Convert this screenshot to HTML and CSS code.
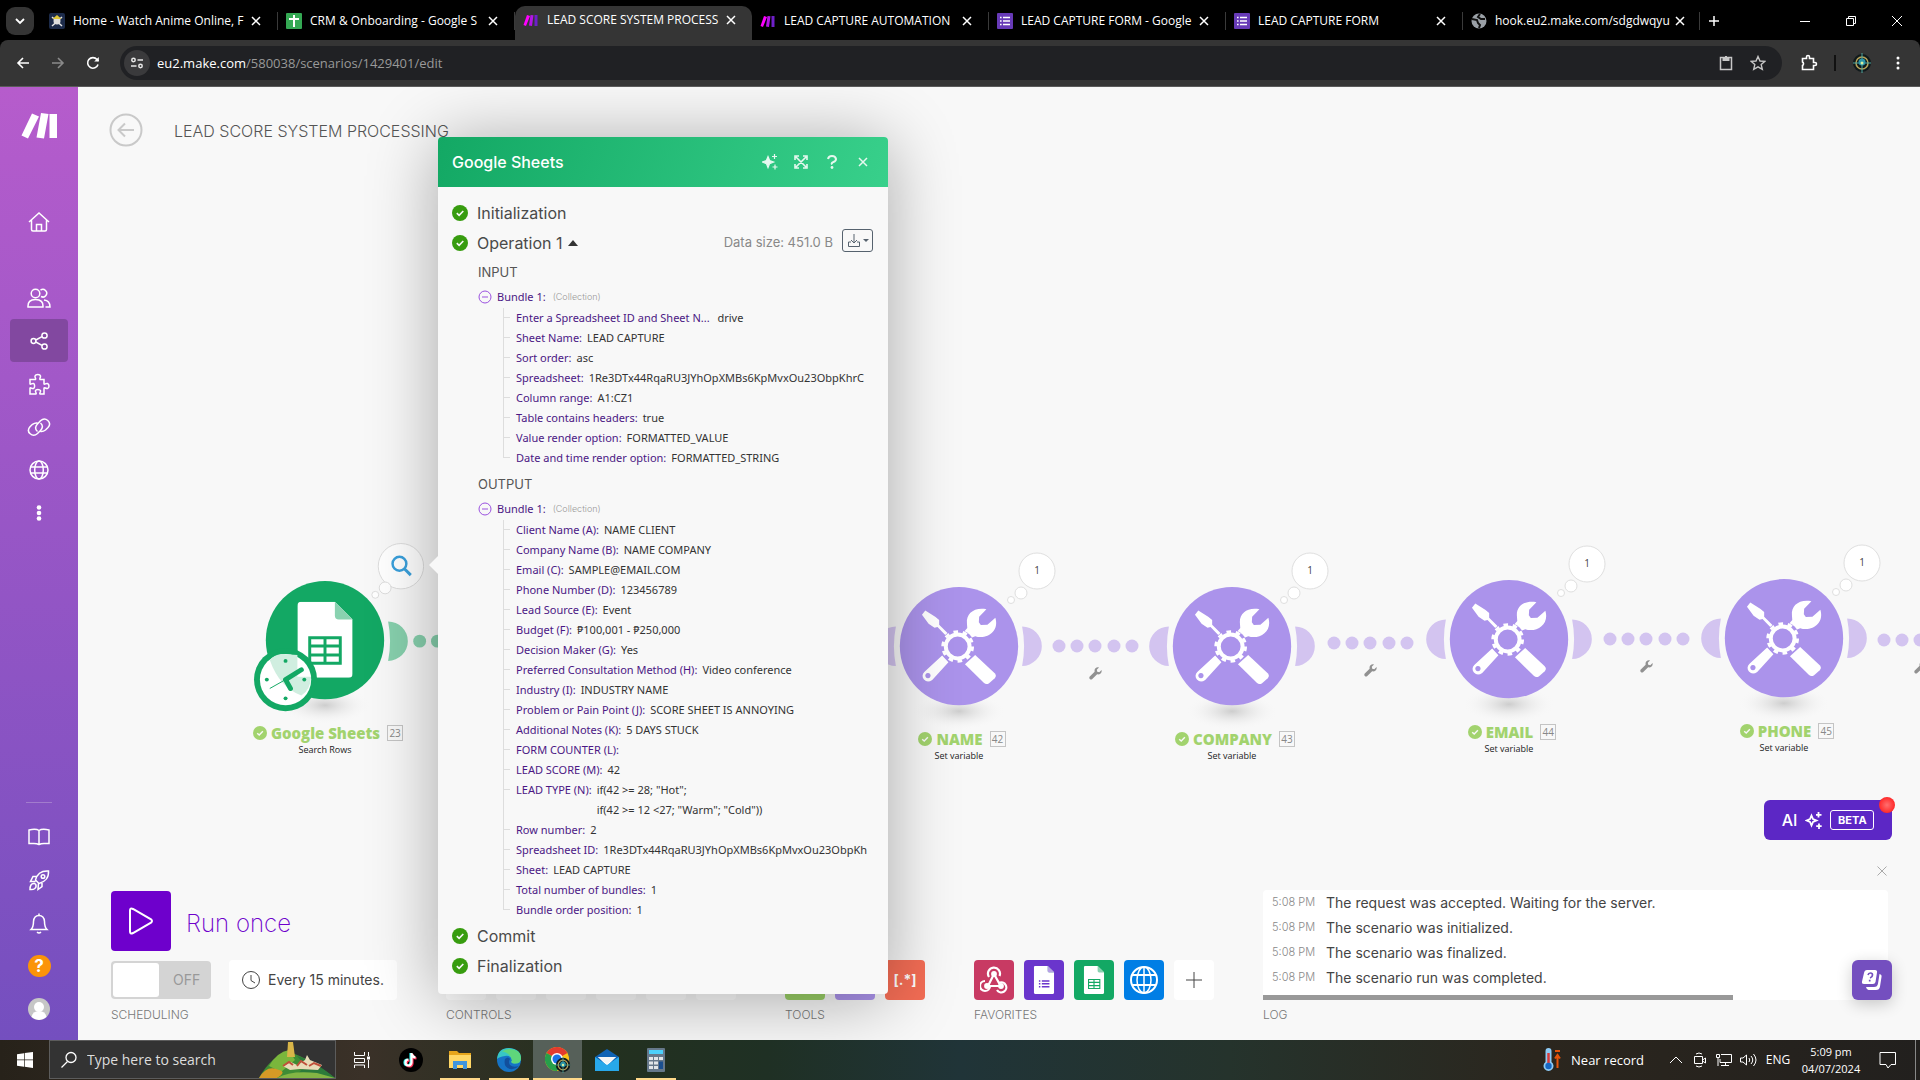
FILE: index.html
```html
<!DOCTYPE html>
<html lang="en">
<head>
<meta charset="utf-8">
<title>LEAD SCORE SYSTEM PROCESSING | Make</title>
<link rel="stylesheet" href="styles.css">
</head>
<body>
<svg class="defs" aria-hidden="true">
  <symbol id="x" viewBox="0 0 12 12"><path d="M2 2l8 8M10 2l-8 8" fill="none" stroke="currentColor" stroke-width="1.5"/></symbol>
  <symbol id="form" viewBox="0 0 16 16"><rect width="16" height="16" rx="1" fill="#673ab7"/><path d="M6 4.5h7M6 8h7M6 11.500h7M3 4.500h1.600M3 8h1.600M3 11.500h1.600" stroke="#fff" stroke-width="1.600"/></symbol>
  <symbol id="make" viewBox="0 0 16 16"><path d="M4 3l3 1-4 10-2.500-1z" fill="#f0f"/><path d="M7.500 3l3 .3-1.500 10.700-3-.4z" fill="#b414e8"/><path d="M11.500 3h3v11h-3z" fill="#6e1fc9"/></symbol>
  <symbol id="check" viewBox="0 0 16 16"><circle cx="8" cy="8" r="8" fill="currentColor"/><path d="M4.800 8.200l2.300 2.200 4.200-4.400" fill="none" stroke="#f8f8f8" stroke-width="1.600"/></symbol>
  <symbol id="minus" viewBox="0 0 14 14"><circle cx="7" cy="7" r="6" fill="none" stroke="currentColor"/><path d="M4 7h6" stroke="currentColor"/></symbol>
  <symbol id="spark" viewBox="0 0 16 16"><path d="M6 2.500l1.600 4 4 1.500-4 1.600-1.600 4-1.600-4-4-1.600 4-1.500zM12.500 0v5M10 2.500h5M13 10.500v5M10.500 13h5" fill="currentColor" stroke="currentColor" stroke-width="1.200"/></symbol>
  <symbol id="sheet" viewBox="0 0 56 77"><path d="M4 0h34l18 18v55q0 4-4 4H4q-4 0-4-4V4q0-4 4-4z" fill="#fff"/><path d="M38 0l18 18H42q-4 0-4-4z" fill="#89d2b0"/></symbol>
  <symbol id="wrench" viewBox="0 0 12 12"><path d="M11.600 2.800L9.500 4.900 7.600 4.400 7.200 2.500 9.200.4C6.700-.3 4.600 1.800 5.200 4.300L.5 9.100c-.8 1.600.8 3.100 2.300 2.300L7.500 6.800c2.500.6 4.700-1.500 4.100-4z" fill="#919191"/></symbol>
  <symbol id="link-dots" viewBox="0 0 88 44"><g fill="#d3c4f0"><circle cx="7" cy="7" r="6.500"/><circle cx="25" cy="7" r="6.500"/><circle cx="43" cy="7" r="6.500"/><circle cx="62" cy="7" r="6.500"/><circle cx="80" cy="7" r="6.500"/></g><use href="#wrench" x="37" y="28" width="13" height="13"/></symbol>
  <symbol id="tools" viewBox="0 0 358 358">
    <g fill="#fff">
      <path d="M77 71L67 84 87 111 105 123 114 121 141 149 148 143 119 114 119 100 107 90z"/>
      <path d="M262 67C225 60 200 80 203 110L204 124 195 135 215 154 228 149C262 160 302 135 289 93L265 114 245 115 239 107 240 90z"/>
      <path d="M128 207L147 228 98 281Q84 292 73 280 64 268 74 257zM85 260a8 8 0 1 0 .1 0z" fill-rule="evenodd"/>
      <path d="M197 234L228 206 287 261Q294 268 287 276L270 291Q262 297 254 290z"/>
    </g>
    <circle cx="175" cy="180" r="51" fill="#ab93eb"/>
    <circle cx="175" cy="180" r="36" fill="none" stroke="#fff" stroke-width="12"/>
    <circle cx="175" cy="180" r="45" fill="none" stroke="#fff" stroke-width="9" stroke-dasharray="14 14.270"/>
  </symbol>
  <symbol id="bubbles" viewBox="0 0 60 60"><g fill="#fff" stroke="#dfdfdf"><circle cx="38" cy="20" r="18"/><circle cx="22" cy="42" r="6"/><circle cx="12" cy="49" r="3.500"/></g></symbol>
  <radialGradient id="shade"><stop offset="0" stop-color="#cdcdcd"/><stop offset="1" stop-color="#f8f8f8" stop-opacity="0"/></radialGradient>
  <symbol id="module" viewBox="-25 0 170 144">
    <ellipse cx="60" cy="126" rx="47" ry="19" fill="url(#shade)"/>
    <path d="M124 40a20 20 0 0 1 0 40q4-20 0-40zM-4 40a20 20 0 0 0 0 40q-4-20 0-40z" fill="#d3c4f0"/>
    <circle cx="60" cy="60" r="60" fill="#ab93eb"/><use href="#tools" width="120" height="120"/>
  </symbol>
  <symbol id="badge-emblem" viewBox="0 0 20 20"><circle cx="10" cy="10" r="9" fill="#101a1c"/><circle cx="10" cy="10" r="6" fill="none" stroke="#b8a45a" stroke-width="1.500"/><path d="M10 0v20M1 10h18" stroke="#4fa7a0"/><circle cx="10" cy="9" r="3.500" fill="#2a94a8"/><circle cx="10" cy="10" r="1.500" fill="#d9f0a0"/></symbol>
</svg>

<header class="browser">
  <div class="tabs">
    <button class="tab-menu" aria-label="Search tabs"><svg width="10" height="10" viewBox="0 0 10 10"><path d="M1 3l4 4 4-4" fill="none" stroke="#fff" stroke-width="1.800"/></svg></button>
    <div class="tab"><svg class="fav" viewBox="0 0 16 16"><rect width="16" height="16" rx="2" fill="#1c2b4a"/><path d="M3 4l10 9M13 4L3 13" stroke="#e6e6e6" stroke-width="1.500"/><circle cx="8" cy="8" r="3.500" fill="#ddd"/><path d="M3.500 6h9L8 2z" fill="#dfc638"/></svg><span>Home - Watch Anime Online, F</span><button aria-label="Close tab"><svg><use href="#x"/></svg></button></div>
    <div class="tab"><svg class="fav" viewBox="0 0 16 16"><rect width="16" height="16" rx="1" fill="#34a853"/><path d="M8 2v12M3 6h10" stroke="#fff" stroke-width="2"/></svg><span>CRM &amp; Onboarding - Google S</span><button aria-label="Close tab"><svg><use href="#x"/></svg></button></div>
    <div class="tab active"><svg class="fav"><use href="#make"/></svg><span>LEAD SCORE SYSTEM PROCESS</span><button aria-label="Close tab"><svg><use href="#x"/></svg></button></div>
    <div class="tab"><svg class="fav"><use href="#make"/></svg><span>LEAD CAPTURE AUTOMATION</span><button aria-label="Close tab"><svg><use href="#x"/></svg></button></div>
    <div class="tab"><svg class="fav"><use href="#form"/></svg><span>LEAD CAPTURE FORM - Google</span><button aria-label="Close tab"><svg><use href="#x"/></svg></button></div>
    <div class="tab"><svg class="fav"><use href="#form"/></svg><span>LEAD CAPTURE FORM</span><button aria-label="Close tab"><svg><use href="#x"/></svg></button></div>
    <div class="tab"><svg class="fav" viewBox="0 0 16 16"><circle cx="8" cy="8" r="7.500" fill="#9aa0a6"/><path d="M1 6l5 1 1 3 2 2-1 3M9 1l-2 3 3 2h4" fill="none" stroke="#111" stroke-width="2"/></svg><span>hook.eu2.make.com/sdgdwqyu</span><button aria-label="Close tab"><svg><use href="#x"/></svg></button></div>
    <button class="new-tab" aria-label="New tab"><svg width="12" height="12" viewBox="0 0 12 12"><path d="M6 1v10M1 6h10" stroke="#fff" stroke-width="1.500"/></svg></button>
    <div class="win">
      <button aria-label="Minimize"><svg width="10" height="10" viewBox="0 0 10 10"><path d="M0 5.500h10" stroke="#fff"/></svg></button>
      <button aria-label="Restore"><svg width="10" height="10" viewBox="0 0 10 10"><path d="M.5 2.500h7v7h-7zM2.500 2.500v-2h7v7h-2" fill="none" stroke="#fff"/></svg></button>
      <button aria-label="Close"><svg width="10" height="10" viewBox="0 0 10 10"><path d="M0 0l10 10M10 0L0 10" stroke="#fff"/></svg></button>
    </div>
  </div>
  <div class="toolbar">
    <button aria-label="Back"><svg width="14" height="14" viewBox="0 0 14 14"><path d="M13 7H2M7 2L2 7l5 5" fill="none" stroke="#fff" stroke-width="1.600"/></svg></button>
    <button aria-label="Forward"><svg width="14" height="14" viewBox="0 0 14 14"><path d="M1 7h11M7 2l5 5-5 5" fill="none" stroke="#8a8a8a" stroke-width="1.600"/></svg></button>
    <button aria-label="Reload"><svg width="14" height="14" viewBox="0 0 14 14"><path d="M12 8.500A5.300 5.300 0 1 1 11 3.500l1.500 1.500" fill="none" stroke="#fff" stroke-width="1.600"/><path d="M12.800 1v4.600H8.200z" fill="#fff"/></svg></button>
    <div class="omnibox">
      <span class="site"><svg width="14" height="14" viewBox="0 0 14 14" fill="none" stroke="#e8e8e8" stroke-width="1.500"><circle cx="3.500" cy="4" r="1.700"/><path d="M7.500 4H13M1 10h5.500"/><circle cx="10.500" cy="10" r="1.700"/></svg></span>
      <p class="url">eu2.make.com<span>/580038/scenarios/1429401/edit</span></p>
      <button aria-label="Clipboard"><svg width="16" height="16" viewBox="0 0 16 16" fill="none" stroke="#c7c7c7" stroke-width="1.500"><path d="M2.500 2.500h11v12h-11z"/><path d="M5.500 3h5v2h-5zM8 1v2" stroke-width="2"/></svg></button>
      <button aria-label="Bookmark"><svg width="16" height="16" viewBox="0 0 16 16"><path d="M8 1.500l2 4.500 4.800.4-3.600 3.200 1.100 4.800L8 11.800l-4.300 2.600 1.100-4.800L1.200 6.400 6 6z" fill="none" stroke="#c7c7c7" stroke-width="1.400"/></svg></button>
    </div>
    <button aria-label="Extensions"><svg width="18" height="18" viewBox="0 0 18 18"><path d="M2.500 4.500h4V3a1.500 1.500 0 0 1 3 0v1.500h4v4H15a1.500 1.500 0 0 1 0 3h-1.500v4h-11v-4a2 2 0 0 0 0-3.500z" fill="none" stroke="#fff" stroke-width="1.600"/></svg></button>
    <i class="bar-split"></i>
    <button aria-label="Profile"><svg width="20" height="20"><use href="#badge-emblem"/></svg></button>
    <button aria-label="Menu"><svg width="4" height="16" viewBox="0 0 4 16" fill="#fff"><circle cx="2" cy="3" r="1.500"/><circle cx="2" cy="8" r="1.500"/><circle cx="2" cy="13" r="1.500"/></svg></button>
  </div>
</header>

<div class="app">
  <nav class="side">
    <a class="logo" href="#" aria-label="Make"><svg width="36" height="26" viewBox="0 0 36 26" fill="#fff"><path d="M11 .5l7 3L7 25.500l-6.500-3zM20 0l7.500 1-4.500 24.500-7.500-1zM28.500 1H36v24h-7.500z"/></svg></a>
    <a class="home" href="#" aria-label="Home"><svg viewBox="0 0 24 24"><path d="M2 12L12 3l10 9M4.500 10v9.500q0 1.500 1.500 1.500h12q1.500 0 1.500-1.500V10M9.500 21v-6.500h5V21"/></svg></a>
    <a href="#" aria-label="Team"><svg viewBox="0 0 24 24"><circle cx="8.500" cy="7.500" r="4.300"/><path d="M13.500 4.200a3.800 3.800 0 1 1 .5 6.300M1 21q-.5-7.500 7.500-7.500T16 21zM17 14q6 .5 6 7h-4.500"/></svg></a>
    <a class="on" href="#" aria-label="Scenarios"><svg viewBox="0 0 24 24"><circle cx="6.500" cy="12" r="2.400"/><circle cx="17.500" cy="6.500" r="2.600"/><circle cx="17.500" cy="17.500" r="2.600"/><path d="M8.800 11l6.200-3.300M8.800 13l6.200 3.300"/></svg></a>
    <a href="#" aria-label="Templates"><svg viewBox="0 0 24 24"><path d="M3 7.500h5.500c1-1-1-1.500-.5-3.500.8-2 5-2 5.500 0 .3 2-1.500 2.500-.5 3.500h4v4.500c1 1 1.500-1 3.500-.5 2 .8 2 4.500 0 5-2 .3-2.500-1.500-3.500-.5v6h-4c-1-1 1-1.500.5-3.500-.8-1.500-4.500-1.500-5 0-.5 2 1.500 2.500.5 3.500H3v-6c1-1 1.500 1 3.500.5 1.500-.8 1.500-4.500 0-5-2-.5-2.500 1.500-3.500.5z"/></svg></a>
    <a href="#" aria-label="Connections"><svg viewBox="0 0 24 24"><path d="M10.500 16.500c-3-2.500-2-5.500 0-7.500l3-3.200c5-4.500 12 1.500 7.500 6.700l-2.500 2.500q-2.500 2-5 1.500M13.500 8c3 2.500 2 5.500 0 7.500l-3 3C5.500 23-1.500 17 3 11.800l2.500-2.500Q8 7.500 10.500 8"/></svg></a>
    <a href="#" aria-label="Webhooks"><svg viewBox="0 0 24 24"><circle cx="12" cy="12" r="9"/><ellipse cx="12" cy="12" rx="4.300" ry="9"/><path d="M4 9h16M4 15h16"/></svg></a>
    <a href="#" aria-label="More"><svg viewBox="0 0 24 24" class="solid"><circle cx="12" cy="6.500" r="2.300"/><circle cx="12" cy="12" r="2.300"/><circle cx="12" cy="17.500" r="2.300"/></svg></a>
    <hr>
    <a href="#" aria-label="Resources"><svg viewBox="0 0 24 24"><path d="M12 19.500Q10 18.500 7 18.500H2V5q7-1.500 10 .5Q15 3.500 22 5v13.500h-5q-3 0-5 1zM12 5.500v14"/></svg></a>
    <a href="#" aria-label="What's new"><svg viewBox="0 0 24 24"><path d="M8.500 12C10 6 14 2.500 21.500 3c.5 6.500-3.500 11-9.500 12.500zM9.500 8.500H6L3.500 13.500h5M15 15v3.500L11 21.500l.5-6M7.500 15.500C4 15 3 18 3 21.500c4 .5 7-1.500 5.800-5z"/><circle cx="16" cy="8.500" r="1.800"/></svg></a>
    <a href="#" aria-label="Notifications"><svg viewBox="0 0 24 24"><path d="M4 18.500q2.500-2.500 2.500-8Q7 4.500 12 4.500t5.500 6q0 5.500 2.500 8zM12 2.500v2M10 21q2 2 4 0"/></svg></a>
    <a href="#" class="help" aria-label="Help"><b>?</b></a>
    <a href="#" aria-label="Profile"><svg class="avatar" viewBox="0 0 22 22"><circle cx="11" cy="11" r="11" fill="#c6c6c6"/><circle cx="11" cy="9" r="5" fill="#fff"/><path d="M3.500 19q1-6 7.500-6t7.500 6q-7.500 6-15 0z" fill="#fff"/></svg></a>
  </nav>

  <main>
    <div class="canvas">
      <div class="node n-sheets">
        <svg class="mod" viewBox="-25 0 170 144">
          <ellipse cx="60" cy="126" rx="47" ry="19" fill="url(#shade)"/>
          <path d="M124 41a20 20 0 0 1 0 40q4-20 0-40z" fill="#87d0ad"/>
          <circle cx="156" cy="61" r="6.500" fill="#87d0ad"/><circle cx="174" cy="61" r="6.500" fill="#87d0ad"/>
          <circle cx="60" cy="60" r="60" fill="#13a864"/>
          <use href="#sheet" x="32" y="21" width="56" height="77"/>
          <path d="M44.500 57.500h31v26h-31zM44 66h32M44 75h32M60 57v27" fill="none" stroke="#13a864" stroke-width="3"/>
          <circle cx="20" cy="100" r="32" fill="#13a864"/><circle cx="20" cy="100" r="26" fill="#fff"/>
          <path d="M4 80q4-5 12-6l16 1v22h14q-1 14-10 19Q14 108 4 80z" fill="#d0eee0"/>
          <path d="M20 100l16-10M20 100l5 9" stroke="#13a864" stroke-width="5" stroke-linecap="round"/><path d="M4 109l16-9" stroke="#13a864"/>
          <g fill="#13a864"><circle cx="20" cy="81" r="2"/><circle cx="39" cy="100" r="2"/><circle cx="20" cy="119" r="2"/><circle cx="1" cy="100" r="2"/></g>
          <g fill="#fff" stroke="#dcdcdc"><circle cx="137" cy="-15" r="23"/><circle cx="121" cy="7" r="6"/><circle cx="111" cy="14" r="3.500"/></g>
          <circle cx="135.500" cy="-17.500" r="7" fill="none" stroke="#3aa0dc" stroke-width="2.500"/><path d="M140.500-12.500l6.500 6.500" stroke="#3aa0dc" stroke-width="3"/>
        </svg>
        <h2><svg><use href="#check"/></svg>Google Sheets<small>23</small></h2><p>Search Rows</p>
      </div>
      <div class="node n-name"><svg class="mod"><use href="#module"/></svg><div class="bubble"><svg><use href="#bubbles"/></svg><span>1</span></div><h2><svg><use href="#check"/></svg>NAME<small>42</small></h2><p>Set variable</p></div>
      <div class="node n-company"><svg class="mod"><use href="#module"/></svg><div class="bubble"><svg><use href="#bubbles"/></svg><span>1</span></div><h2><svg><use href="#check"/></svg>COMPANY<small>43</small></h2><p>Set variable</p></div>
      <div class="node n-email"><svg class="mod"><use href="#module"/></svg><div class="bubble"><svg><use href="#bubbles"/></svg><span>1</span></div><h2><svg><use href="#check"/></svg>EMAIL<small>44</small></h2><p>Set variable</p></div>
      <div class="node n-phone"><svg class="mod"><use href="#module"/></svg><div class="bubble"><svg><use href="#bubbles"/></svg><span>1</span></div><h2><svg><use href="#check"/></svg>PHONE<small>45</small></h2><p>Set variable</p></div>
      <svg class="conn c1"><use href="#link-dots"/></svg>
      <svg class="conn c2"><use href="#link-dots"/></svg>
      <svg class="conn c3"><use href="#link-dots"/></svg>
      <svg class="conn c4"><use href="#link-dots"/></svg>
    </div>

    <div class="title">
      <button aria-label="Back to scenario"><svg width="34" height="34" viewBox="0 0 34 34" fill="none" stroke="#c9c9c9" stroke-width="2"><circle cx="17" cy="17" r="15.500"/><path d="M25 17H10M16 10.500L9.500 17l6.500 6.500"/></svg></button>
      <h1>LEAD SCORE SYSTEM PROCESSING</h1>
    </div>

    <footer class="panel">
      <section class="sched">
        <div class="run"><button id="run" aria-label="Run once"><svg width="26" height="28" viewBox="0 0 26 28"><path d="M2 3.500v21q0 3 3 1.500l18-10.300q2-1.700 0-3.400L5 2Q2 .5 2 3.500z" fill="none" stroke="#fff" stroke-width="2"/></svg></button><label for="run">Run once</label></div>
        <div class="tools-row">
          <label class="switch"><input type="checkbox" aria-label="Scheduling"><span>OFF</span></label>
          <button class="every"><svg width="18" height="18" viewBox="0 0 18 18" fill="none" stroke="#444"><circle cx="9" cy="9" r="8.500"/><path d="M9 4v5.500l4 2.500"/></svg>Every 15 minutes.</button>
        </div>
        <h3>SCHEDULING</h3>
      </section>
      <section>
        <div class="tools-row"><button aria-label="Save"></button><button aria-label="Settings"></button><button aria-label="Notes"></button><button aria-label="Align"></button><button aria-label="Explain"></button><button aria-label="More"></button></div>
        <h3>CONTROLS</h3>
      </section>
      <section>
        <div class="tools-row"><button class="lime" aria-label="Flow control"></button><button class="lilac" aria-label="Tools"></button><button class="coral" aria-label="Text parser">[.*]</button></div>
        <h3>TOOLS</h3>
      </section>
      <section>
        <div class="tools-row">
          <button class="rose" aria-label="Webhooks"><svg width="28" height="28" viewBox="0 0 28 28" fill="none" stroke="#fff" stroke-width="2.200"><path d="M9 11a6 6 0 1 1 10.500-1M14 8l5 9a5 5 0 1 1-2 7M19.500 20H10a5 5 0 1 1-5-5M14 8l-5.500 11"/><g fill="#fff"><circle cx="14" cy="8" r="1.800"/><circle cx="7" cy="20" r="1.800"/><circle cx="21" cy="20" r="1.800"/></g></svg></button>
          <button class="violet" aria-label="Google Forms"><svg width="22" height="28" viewBox="0 0 56 77"><use href="#sheet" width="56" height="77"/><path d="M38 0l18 18H42q-4 0-4-4z" fill="#b79fe6"/><path d="M14 41h4M14 49h4M14 57h4M22 41h21M22 49h21M22 57h21" stroke="#6a35cc" stroke-width="4"/></svg></button>
          <button class="green" aria-label="Google Sheets"><svg width="22" height="28" viewBox="0 0 56 77"><use href="#sheet" width="56" height="77"/><path d="M13 37h31v25H13zM13 45h31M13 54h31M28 37v25" fill="none" stroke="#13a864" stroke-width="3"/></svg></button>
          <button class="blue" aria-label="HTTP"><svg width="28" height="28" viewBox="0 0 28 28" fill="none" stroke="#fff" stroke-width="2"><circle cx="14" cy="14" r="13"/><ellipse cx="14" cy="14" rx="7" ry="13" stroke-width="1.500"/><path d="M2 9h24M2 19h24"/><path d="M14 1v26" stroke-width="1.500"/></svg></button>
          <button class="white" aria-label="Add favorite"><svg width="16" height="16" viewBox="0 0 16 16"><path d="M8 0v16M0 8h16" stroke="#444"/></svg></button>
        </div>
        <h3>FAVORITES</h3>
      </section>
      <section class="log">
        <button class="close" aria-label="Close log"><svg width="12" height="12" viewBox="0 0 12 12"><path d="M1.500 1.500l9 9M10.500 1.500l-9 9" stroke="#aaa"/></svg></button>
        <ul>
          <li><time>5:08 PM</time>The request was accepted. Waiting for the server.</li>
          <li><time>5:08 PM</time>The scenario was initialized.</li>
          <li><time>5:08 PM</time>The scenario was finalized.</li>
          <li><time>5:08 PM</time>The scenario run was completed.</li>
        </ul>
        <h3>LOG</h3>
      </section>
    </footer>

    <button class="ai">AI<svg width="17" height="17" viewBox="0 0 17 17" fill="none" stroke="#fff" stroke-width="1.800"><path d="M6.500 3.500L8 7l3.500 1.500L8 10l-1.500 3.500L5 10 1.500 8.500 5 7zM13.500 0v5.500M11 2.800h5.500M14 11.500V17M11.200 14.200h5.500"/></svg><span>BETA</span></button>
    <i class="ping"></i>
    <button class="chat" aria-label="Help center"><svg width="22" height="22" viewBox="0 0 22 22"><path d="M6 1h8q2.500 0 2 2.500l-1.500 9.500q-.5 2-2.500 2H3q-2.500 0-2-2.500L3 4q.5-3 3-3z" fill="#fff"/><path d="M18.500 5q2.500.5 2 3l-1.500 9.500q-.5 3.500-4 3.500H7.500q-2-.5-2.500-3h8q3.500 0 4-3.500z" fill="#fff"/><path d="M7 6q.5-2 2.500-2t2 2-2.500 3M8.700 10.800v1.600" fill="none" stroke="#744fbf" stroke-width="1.700"/></svg></button>

    <article class="modal">
      <header>
        <h2>Google Sheets</h2>
        <button aria-label="Assist"><svg width="16" height="16"><use href="#spark"/></svg></button>
        <button aria-label="Expand"><svg width="14" height="14" viewBox="0 0 14 14" fill="none" stroke="currentColor" stroke-width="1.600"><path d="M1 5V1h4M9 1h4v4M13 9v4H9M5 13H1V9M2 2l10 10M12 2L2 12"/></svg></button>
        <button aria-label="Help"><svg width="10" height="14" viewBox="0 0 10 14"><path d="M1 4q.5-3 4-3t4 3q0 2-2.500 3T5 9.500" fill="none" stroke="currentColor" stroke-width="2"/><circle cx="5" cy="12.500" r="1.400" fill="currentColor"/></svg></button>
        <button aria-label="Close"><svg width="10" height="10" viewBox="0 0 10 10"><path d="M1 1l8 8M9 1L1 9" stroke="currentColor" stroke-width="1.500"/></svg></button>
      </header>
      <div class="body">
        <h3><svg><use href="#check"/></svg>Initialization</h3>
        <h3><svg><use href="#check"/></svg>Operation 1<i class="up"></i><span class="size">Data size: 451.0 B</span><button aria-label="Download"><svg width="22" height="14" viewBox="0 0 22 14" fill="none" stroke="#56626e"><path d="M4 8H1.500v4.500h11V8H10M7 0v9M4 6l3 3 3-3"/><path d="M16 5h6l-3 3z" fill="#56626e" stroke="none"/></svg></button></h3>
        <section>
          <h4>INPUT</h4>
          <p><svg><use href="#minus"/></svg>Bundle 1:<small>(Collection)</small></p>
          <ul>
            <li><b>Enter a Spreadsheet ID and Sheet N...</b>&nbsp;drive</li>
            <li><b>Sheet Name:</b>LEAD CAPTURE</li>
            <li><b>Sort order:</b>asc</li>
            <li><b>Spreadsheet:</b>1Re3DTx44RqaRU3JYhOpXMBs6KpMvxOu23ObpKhrC</li>
            <li><b>Column range:</b>A1:CZ1</li>
            <li><b>Table contains headers:</b>true</li>
            <li><b>Value render option:</b>FORMATTED_VALUE</li>
            <li><b>Date and time render option:</b>FORMATTED_STRING</li>
          </ul>
        </section>
        <section>
          <h4>OUTPUT</h4>
          <p><svg><use href="#minus"/></svg>Bundle 1:<small>(Collection)</small></p>
          <ul>
            <li><b>Client Name (A):</b>NAME CLIENT</li>
            <li><b>Company Name (B):</b>NAME COMPANY</li>
            <li><b>Email (C):</b>SAMPLE@EMAIL.COM</li>
            <li><b>Phone Number (D):</b>123456789</li>
            <li><b>Lead Source (E):</b>Event</li>
            <li><b>Budget (F):</b>₱100,001 - ₱250,000</li>
            <li><b>Decision Maker (G):</b>Yes</li>
            <li><b>Preferred Consultation Method (H):</b>Video conference</li>
            <li><b>Industry (I):</b>INDUSTRY NAME</li>
            <li><b>Problem or Pain Point (J):</b>SCORE SHEET IS ANNOYING</li>
            <li><b>Additional Notes (K):</b>5 DAYS STUCK</li>
            <li><b>FORM COUNTER (L):</b></li>
            <li><b>LEAD SCORE (M):</b>42</li>
            <li><b>LEAD TYPE (N):</b><span>if(42 &gt;= 28; "Hot";<br>if(42 &gt;= 12 &lt;27; "Warm"; "Cold"))</span></li>
            <li><b>Row number:</b>2</li>
            <li><b>Spreadsheet ID:</b>1Re3DTx44RqaRU3JYhOpXMBs6KpMvxOu23ObpKh</li>
            <li><b>Sheet:</b>LEAD CAPTURE</li>
            <li><b>Total number of bundles:</b>1</li>
            <li><b>Bundle order position:</b>1</li>
          </ul>
        </section>
        <h3><svg><use href="#check"/></svg>Commit</h3>
        <h3><svg><use href="#check"/></svg>Finalization</h3>
      </div>
    </article>
  </main>
</div>

<footer class="taskbar">
  <button class="start" aria-label="Start"><svg width="16" height="16" viewBox="0 0 16 16" fill="#fff"><path d="M0 2.200l7-1v6.400H0zM7.700 1.100L16 0v7.600H7.700zM0 8.300h7v6.400l-7-1zM7.700 8.300H16V16l-8.300-1.200z"/></svg></button>
  <label class="search"><svg width="18" height="18" viewBox="0 0 18 18" fill="none" stroke="#fff" stroke-width="1.300"><circle cx="11" cy="6.500" r="5"/><path d="M7.500 10.500L1.500 16.500"/></svg><input type="search" placeholder="Type here to search" aria-label="Type here to search"><svg class="hill" width="76" height="36" viewBox="0 0 76 36"><path d="M0 36Q12 14 30 10q20 6 46 26z" fill="#3f8c35"/><path d="M10 24Q18 10 30 8l6 10-14 12z" fill="#7ab63c"/><path d="M0 36q8-14 20-8 8 2-2 8z" fill="#d69a26"/><path d="M28 15l1-15h5l2 15z" fill="#d9b548"/><path d="M38 14q16 4 38 22H30q22-8 8-22z" fill="#2c7a3a"/><path d="M24 24l8-4 6 3 8-5 2-5 3 5 12 5-4 5-18-1-10 1z" fill="#e8dcb8"/><path d="M24 24l6-4 4 3M38 24l4-5 6 4M50 24l5-3 7 3" fill="none" stroke="#c0503a" stroke-width="2"/><path d="M18 36q14-8 40-5l18 5z" fill="#83b544"/></svg></label>
  <button aria-label="Task view"><svg width="18" height="16" viewBox="0 0 18 16" fill="none" stroke="#fff"><path d="M1.500 0v3.500h10V0M1.500 6.500h10v4h-10zM1.500 16v-3h10v3M15.500 0v4M15.500 8v8"/><path d="M14 6h3" stroke-width="3"/></svg></button>
  <button aria-label="TikTok"><svg width="24" height="24" viewBox="0 0 24 24"><circle cx="12" cy="12" r="12" fill="#000"/><g fill="none" stroke-width="2.200"><path d="M12.500 5v9.500a3 3 0 1 1-3-3M12.500 5.500q.5 3.500 4 4" stroke="#25f4ee" transform="translate(-1 0)"/><path d="M12.500 5v9.500a3 3 0 1 1-3-3M12.500 5.500q.5 3.500 4 4" stroke="#fe2c55" transform="translate(1 1)"/><path d="M12.500 5v9.500a3 3 0 1 1-3-3M12.500 5.500q.5 3.500 4 4" stroke="#fff"/></g></svg></button>
  <button class="open" aria-label="File Explorer"><svg width="22" height="20" viewBox="0 0 22 20"><path d="M0 1h8l2 2h12v15H0z" fill="#e6a51c"/><path d="M0 5h22v13H0z" fill="#ffd766"/><path d="M4 19v-8h14v8h-4v-4H8v4z" fill="#3f95dd"/></svg></button>
  <button class="open" aria-label="Edge"><svg width="24" height="24" viewBox="0 0 24 24"><circle cx="12" cy="12" r="12" fill="#1673c5"/><path d="M0 11Q1 0 12 0q12 1 12 10 0 6-7 5.500-4-.5-2-3Q14 7 8 8q-6 1-8 3z" fill="#38c6c4"/><path d="M13 1q11 1 11 9 0 6-7 5.500-4-.5-2-3-2-8-10-9Q8 1 13 1z" fill="#5fd67b"/><path d="M8 11q-2 8 5 10 5 1 9-3-6 2-9-1-2-3 0-6-2-3-5 0z" fill="#124f9c"/></svg></button>
  <button class="open front" aria-label="Chrome"><svg width="26" height="26" viewBox="0 0 26 26"><circle cx="12" cy="12" r="12" fill="#fbc116"/><path d="M12 12L1.600 6A12 12 0 0 1 22.400 6z" fill="#e33b2e"/><path d="M12 12L1.600 6A12 12 0 0 0 12 24l4-7z" fill="#269f4b"/><circle cx="12" cy="12" r="6" fill="#fff"/><circle cx="12" cy="12" r="4.500" fill="#1a73e8"/><use href="#badge-emblem" x="10" y="10" width="16" height="16"/></svg></button>
  <button aria-label="Mail"><svg width="24" height="24" viewBox="0 0 24 24"><path d="M0 9l12-8 12 8v14H0z" fill="#0f62b4"/><path d="M3 9h18l-9 9z" fill="#fff"/><path d="M0 9l12 8 12-8v14H0z" fill="#28a8ea"/><path d="M3 9h18l-9 7z" fill="#f4f4f4"/></svg></button>
  <button class="open" aria-label="Calculator"><svg width="18" height="24" viewBox="0 0 18 24"><rect width="18" height="24" rx="1" fill="#66788a"/><path d="M2 2h14v4H2z" fill="#4cd0fa"/><path d="M2 9h4v3H2zM7 9h4v3H7zM12 9h4v3h-4zM2 13.500h4v3H2zM7 13.500h4v3H7zM2 18h4v3H2zM7 18h4v3H7z" fill="#e1e5e8"/><path d="M12 13.500h4V21h-4z" fill="#1b4f8f"/></svg></button>
  <div class="tray">
    <button class="weather"><svg width="18" height="24" viewBox="0 0 18 24"><path d="M2.500 3a3 3 0 0 1 6 0v11a5 5 0 1 1-6 0z" fill="#8ecbf5"/><path d="M5.500 5v12" stroke="#d83b3b" stroke-width="2.500"/><circle cx="5.500" cy="18" r="3.200" fill="#1668c4"/><path d="M12 3h5M14.500 20V8M12 10.500L14.500 7l2.500 3.500" fill="none" stroke="#e4540c" stroke-width="2"/></svg>Near record</button>
    <button aria-label="Hidden icons"><svg width="12" height="8" viewBox="0 0 12 8"><path d="M0 7l6-6 6 6" fill="none" stroke="#fff"/></svg></button>
    <button aria-label="Meet now"><svg width="14" height="16" viewBox="0 0 14 16" fill="none" stroke="#fff"><path d="M1.500 4.500h8v7h-8zM9.500 8l3-2v5l-3-2M3 2q3-2 6 0M3 14q3 2 6 0"/></svg></button>
    <button aria-label="Network"><svg width="16" height="14" viewBox="0 0 16 14" fill="none" stroke="#fff"><path d="M5 1.500h10.500v8H4V6M5 12.500h8M9.500 9.500v3M.5 1.500h3v3h-3zM2 5v8"/></svg></button>
    <button aria-label="Volume"><svg width="17" height="14" viewBox="0 0 17 14" fill="none" stroke="#fff"><path d="M.5 5v4H3l3.500 3V2L3 5zM9 5q1.500 2 0 4M11 3q3.500 4 0 8M13.500 1q5 6 0 12"/></svg></button>
    <button class="lang">ENG</button>
    <button class="clock">5:09 pm<br>04/07/2024</button>
    <button class="note" aria-label="Notifications"><svg width="18" height="17" viewBox="0 0 18 17"><path d="M1 .5h15.500v12H12L9 16l-2-3.500H1z" fill="none" stroke="#fff"/></svg></button>
  </div>
</footer>
</body>
</html>
```
FILE: styles.css
```css
* { box-sizing: border-box; }
body, h1, h2, h3, h4, p, ul { margin: 0; padding: 0; }
ul { list-style: none; }
body {
  display: flex;
  flex-direction: column;
  height: 100vh;
  overflow: hidden;
  font: 14px/20px Inter, "Liberation Sans", sans-serif;
  color: #444;
}
button {
  margin: 0;
  padding: 0;
  border: 0;
  background: none;
  color: inherit;
  font: inherit;
  display: flex;
  align-items: center;
  justify-content: center;
  flex: none;
}
svg { flex: none; display: block; }
.defs { position: absolute; width: 0; height: 0; }

/* Browser frame */
.browser { background: #000; font: 12px/16px "Open Sans", "Noto Sans", sans-serif; color: #fff; }
.tabs { display: flex; align-items: center; height: 40px; padding: 1px 0 0 6px; }
.tab-menu { width: 28px; height: 28px; border-radius: 9px; background: #353535; margin-right: 7px; }
.tab { display: flex; align-items: center; flex: 0 1 237px; min-width: 0; padding: 0 8px; }
.tab.active { align-self: flex-end; height: 34px; padding-bottom: 6px; background: #353535; border-radius: 10px 10px 0 0; }
.tab .fav { width: 16px; height: 16px; margin-right: 8px; }
.tab span { flex: 1; white-space: nowrap; }
.tab button { width: 16px; height: 16px; margin-left: 2px; margin-right: 5px; }
.tab button svg { width: 12px; height: 12px; }
.tab:not(.active) { border-right: 1px solid #3a3a3a; height: 18px; }
.new-tab { width: 28px; height: 28px; }
.win { display: flex; margin-left: auto; }
.win button { width: 46px; height: 39px; }
.toolbar {
  display: flex;
  align-items: center;
  height: 47px;
  padding: 0 8px 0 5px;
  background: #353535;
  border-bottom: 1px solid #5a5a5a;
  border-radius: 8px 8px 0 0;
}
.toolbar > button { width: 35px; height: 34px; }
.toolbar > button:last-child { width: 28px; margin-left: 5px; }
.omnibox { flex: 1; display: flex; align-items: center; height: 34px; margin: 0 9px 0 10px; padding: 0 8px 0 4px; border-radius: 17px; background: #202124; }
.site { display: grid; place-items: center; width: 26px; height: 26px; border-radius: 13px; background: #3a3a3c; }
.url { flex: 1; margin-left: 7px; font-size: 13px; }
.url span { color: #999; }
.omnibox button { width: 32px; }
.bar-split { width: 2px; height: 16px; background: #111; margin: 0 8px; }

/* App shell */
.app { flex: 1; display: flex; min-height: 0; }
.side {
  width: 78px;
  display: flex;
  flex-direction: column;
  align-items: center;
  padding: 24px 0 10px;
  background: linear-gradient(#b65ccc, #744fbf);
}
.side a { display: grid; place-items: center; width: 58px; height: 43px; border-radius: 4px; color: #fff; text-decoration: none; }
.side a svg { width: 24px; height: 24px; fill: none; stroke: #fff; stroke-width: 1.5; }
.side .logo { height: 30px; }
.side .logo svg { width: 36px; height: 26px; fill: #fff; stroke: none; }
.side .home { margin: 59px 0 33px; }
.side a.on { background: #8248a0; }
.side .solid { fill: #fff; stroke: none; }
.side a .avatar { width: 22px; height: 22px; stroke: none; }
.side hr { width: 26px; border: 0; border-top: 1px solid #a27ccd; margin: auto 0 12px; }
.help b { display: grid; place-items: center; width: 23px; height: 22px; border-radius: 12px; background: #fb9409; font-size: 17px; }

main { flex: 1; min-width: 0; position: relative; overflow: hidden; display: flex; flex-direction: column; background: #f8f8f8; }
.title { display: flex; align-items: center; gap: 31px; padding: 26px 31px; }
.title h1 { font-size: 16px; font-weight: 300; color: #555; padding-top: 2px; }

/* Scenario canvas: nodes sit at free positions */
.canvas { position: absolute; inset: 0; overflow: hidden; }
.node { position: absolute; width: 120px; display: flex; flex-direction: column; align-items: center; font-family: "Open Sans", "Noto Sans", sans-serif; }
.mod { width: 170px; height: 142px; overflow: visible; }
.node h2 { display: flex; align-items: center; gap: 4px; height: 20px; padding-left: 6px; font-size: 15px; font-weight: 800; line-height: 20px; color: #a2d36e; white-space: nowrap; }
.node h2 svg { width: 14px; height: 14px; }
.node small { width: 16px; height: 16px; margin-left: 3px; border: 1px solid #c4c4c4; font-size: 10px; font-weight: 400; line-height: 14px; text-align: center; color: #888; }
.node p { font-size: 9px; line-height: 14px; color: #222; white-space: nowrap; }
.bubble { position: absolute; left: 100px; top: -36px; width: 60px; height: 60px; }
.bubble svg { width: 60px; height: 60px; }
.bubble span { position: absolute; left: 28px; top: 10px; width: 20px; text-align: center; font-size: 10px; line-height: 18px; }
.n-sheets { left: 187px; top: 494px; }
.n-name { left: 821px; top: 500px; }
.n-company { left: 1094px; top: 500px; }
.n-email { left: 1371px; top: 493px; }
.n-phone { left: 1646px; top: 492px; }
.conn { position: absolute; width: 88px; height: 44px; }
.c1 { left: 974px; top: 552px; }
.c2 { left: 1249px; top: 549px; }
.c3 { left: 1525px; top: 545px; }
.c4 { left: 1799px; top: 546px; }

/* Bottom panel */
.panel { position: relative; margin-top: auto; display: flex; align-items: flex-end; gap: 49px; padding: 0 32px 10px 33px; }
.panel h3 { font-size: 12px; font-weight: 300; line-height: 30px; color: #777; }
.tools-row { display: flex; align-items: center; gap: 10px; }
.tools-row button { width: 40px; height: 40px; border-radius: 4px; background: #fff; }
.run { display: flex; align-items: center; gap: 15px; margin-bottom: 9px; }
.run button { width: 60px; height: 60px; border-radius: 4px; background: #6e00cc; }
.run label { font-size: 24px; font-weight: 200; line-height: 30px; color: #6e00cc; padding-top: 6px; }
.sched .tools-row { gap: 18px; }
.switch { display: flex; align-items: center; width: 100px; height: 38px; border-radius: 4px; background: #d4d4d4; color: #999; }
.switch input { appearance: none; margin: 0 14px 0 2px; width: 46px; height: 34px; border-radius: 3px; background: #fff; }
.tools-row .every { width: 168px; gap: 8px; }
.tools-row .lime { background: #9bd167; }
.tools-row .lilac { background: #ab93eb; }
.tools-row .coral { background: #f46d55; color: #fff; font-weight: 700; }
.tools-row .rose { background: #c83a63; }
.tools-row .violet { background: #6a35cc; }
.tools-row .green { background: #13a864; }
.tools-row .blue { background: #007ee5; }
.log { flex: 1; min-width: 0; }
.log .close { margin: 0 0 13px auto; }
.log ul { padding: 0 9px 5px; border-bottom: 5px solid; border-image: linear-gradient(90deg, #999 467px, #fff 467px) 5; border-width: 0 0 5px; background: #fff; border-radius: 4px; }
.log li { display: flex; line-height: 25px; }
.log time { width: 54px; font-size: 11px; font-weight: 300; line-height: 24px; color: #888; }

/* Floating controls */
.ai { position: absolute; right: 28px; bottom: 200px; width: 128px; height: 40px; gap: 8px; border-radius: 6px; background: #5c27c5; color: #fff; font-size: 16px; font-weight: 500; }
.ai span { width: 44px; height: 20px; border: 1px solid #fff; border-radius: 3px; font-size: 11px; font-weight: 700; line-height: 18px; }
.ping { position: absolute; right: 25px; bottom: 227px; width: 16px; height: 16px; border-radius: 8px; background: radial-gradient(#ff6f6f, #ff2a2a 70%); }
.chat { position: absolute; right: 28px; bottom: 40px; width: 40px; height: 40px; border-radius: 6px; background: #744fbf; box-shadow: 0 4px 16px #0003; }

/* Inspector popup */
.modal { position: absolute; left: 360px; top: 50px; width: 450px; border-radius: 4px; background: #f8f8f8; box-shadow: 0 5px 70px #0005; }
.modal::before { content: ""; position: absolute; left: -9px; top: 419px; border: 9px solid transparent; border-left: 0; border-right-color: #f8f8f8; }
.modal header { display: flex; align-items: center; height: 50px; padding: 0 10px 1px 14px; border-radius: 4px 4px 0 0; background: linear-gradient(110deg, #13a864, #38d08b); color: #fff; }
.modal header h2 { flex: 1; font-size: 16px; font-weight: 500; }
.modal header button { width: 31px; height: 30px; color: #e6f8ef; }
.body { padding: 11px 15px 13px 14px; }
.body h3 { display: flex; align-items: center; height: 30px; font-size: 16px; font-weight: 400; color: #4a4a4a; }
.body h3 > svg { width: 16px; height: 16px; margin-right: 9px; color: #379c0f; }
.up { border: 5px solid transparent; border-top: 0; border-bottom: 6px solid #333; margin-left: 5px; }
.size { margin: 0 9px 3px auto; font-size: 13px; color: #888; }
.body h3 button { width: 31px; height: 23px; margin-bottom: 5px; border: 1px solid #56626e; border-radius: 3px; }
.body section { padding: 4px 0 2px 26px; font: 11px/20px "Noto Sans", "Open Sans", sans-serif; color: #333; }
.body section:last-of-type { padding-bottom: 1px; }
.body h4 { font: 400 13px/20px Inter, sans-serif; color: #555; }
.body section p { display: flex; align-items: center; gap: 5px; margin: 5px 0 1px; color: #4b1784; }
.body section p svg { width: 14px; height: 14px; color: #9b51e0; }
.body small { margin-left: 2px; font: 300 9px/20px Inter, sans-serif; color: #999; }
.body ul { padding-left: 25px; }
.body li {
  display: flex;
  gap: 5px;
  padding-left: 13px;
  overflow: hidden;
  white-space: nowrap;
  background:
    linear-gradient(#ddd, #ddd) 0 0 / 1px 100% no-repeat,
    linear-gradient(#ddd, #ddd) 0 9px / 7px 1px no-repeat;
}
.body li:last-child { background-size: 1px 10px, 7px 1px; }
.body li b { font-weight: 400; color: #4b1784; }

/* Taskbar */
.taskbar {
  display: flex;
  height: 40px;
  color: #fff;
  font-family: "Open Sans", "Noto Sans", sans-serif;
  background: linear-gradient(90deg, #27221a, #3a3128 19%, #23301f 31%, #1f3024 40%, #203438 50%, #25332c 64%, #2b261e 80%, #22201e);
}
.taskbar > button { width: 49px; }
.search { display: flex; align-items: center; width: 287px; height: 39px; margin-right: 1px; padding-left: 10px; background: #333; border: 1px solid #5c5c5c; }
.search input { flex: 1; min-width: 0; margin: 0 0 0 9px; padding: 0; border: 0; background: none; font: 14px/20px "Open Sans", "Noto Sans", sans-serif; color: #fff; }
.search input::placeholder { color: #ddd; opacity: 1; }
.hill { align-self: flex-end; }
.open { background: linear-gradient(#ffd98a, #ffd98a) 50% 100% / 40px 2px no-repeat; }
.front { background: linear-gradient(#ffd98a, #ffd98a) 50% 100% / 49px 2px no-repeat #566059; }
.tray { margin-left: auto; display: flex; font-size: 12px; border-right: 1px solid #888; margin-right: 4px; padding-right: 5px; }
.tray button { width: 24px; }
.tray .weather { width: auto; gap: 10px; margin-right: 20px; font-size: 13px; }
.tray .lang { width: 36px; }
.tray .clock { width: 66px; line-height: 17px; font-size: 11px; margin: 0 2px; }
.tray .note { width: 44px; }
```
